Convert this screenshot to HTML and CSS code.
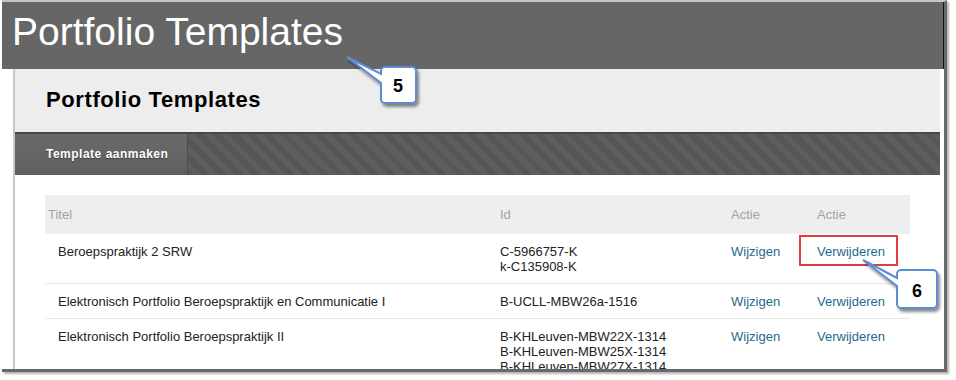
FILE: index.html
```html
<!DOCTYPE html>
<html lang="nl">
<head>
<meta charset="UTF-8">
<meta name="viewport" content="width=device-width, initial-scale=1.0">
<title>Portfolio Templates</title>
<link rel="stylesheet" href="styles.css">
</head>
<body>

<div class="window">
  <header class="topbar">
    <h1>Portfolio Templates</h1>
  </header>

  <main class="content">
    <div class="page-head">
      <h2>Portfolio Templates</h2>
    </div>

    <nav class="action-bar">
      <a class="action-btn" href="#">Template aanmaken</a>
    </nav>

    <div class="list">
      <table class="templates">
        <colgroup>
          <col class="col-title">
          <col class="col-id">
          <col class="col-edit">
          <col class="col-del">
        </colgroup>
        <thead>
          <tr>
            <th class="first">Titel</th>
            <th>Id</th>
            <th>Actie</th>
            <th>Actie</th>
          </tr>
        </thead>
        <tbody>
          <tr>
            <td class="first">Beroepspraktijk 2 SRW</td>
            <td>C-5966757-K<br>k-C135908-K</td>
            <td><a href="#">Wijzigen</a></td>
            <td><a href="#">Verwijderen</a></td>
          </tr>
          <tr>
            <td class="first">Elektronisch Portfolio Beroepspraktijk en Communicatie I</td>
            <td>B-UCLL-MBW26a-1516</td>
            <td><a href="#">Wijzigen</a></td>
            <td><a href="#">Verwijderen</a></td>
          </tr>
          <tr>
            <td class="first">Elektronisch Portfolio Beroepspraktijk II</td>
            <td>B-KHLeuven-MBW22X-1314<br>B-KHLeuven-MBW25X-1314<br>B-KHLeuven-MBW27X-1314</td>
            <td><a href="#">Wijzigen</a></td>
            <td><a href="#">Verwijderen</a></td>
          </tr>
        </tbody>
      </table>
    </div>
  </main>
</div>

<!-- annotation callouts drawn over the screenshot -->
<svg class="callouts" width="956" height="380" viewBox="0 0 956 380">
  <defs>
    <filter id="shadow" x="-20%" y="-20%" width="160%" height="160%">
      <feDropShadow dx="2" dy="3" stdDeviation="1.5" flood-color="#000" flood-opacity="0.45"/>
    </filter>
  </defs>
  <rect class="mark" x="800" y="236" width="97" height="29"/>
  <path class="bubble" filter="url(#shadow)" d="M385,67 h27 a4,4 0 0 1 4,4 v28 a4,4 0 0 1 -4,4 h-27 a4,4 0 0 1 -4,-4 v-16 L347,57 L381,74 v-3 a4,4 0 0 1 4,-4 z"/>
  <text class="bubble-num" x="398" y="92">5</text>
  <path class="bubble" filter="url(#shadow)" d="M901,270 h32 a4,4 0 0 1 4,4 v30 a4,4 0 0 1 -4,4 h-32 a4,4 0 0 1 -4,-4 v-18 L863,260 L897,278 v-4 a4,4 0 0 1 4,-4 z"/>
  <text class="bubble-num" x="917" y="297">6</text>
</svg>

</body>
</html>
```

FILE: styles.css
```css
body {
  margin: 0;
  background-color: #fff;
  font-family: "Liberation Sans", Arial, sans-serif;
  position: relative;
  width: 956px;
  height: 380px;
  overflow: hidden;
}

.window {
  margin-left: 2px;
  width: 942px;
  height: 367px;
  border-top: 2px solid #c6c6c6;
  border-right: 3px solid #686868;
  border-bottom: 3px solid #686868;
  box-shadow: 2px 2px 2px rgba(0, 0, 0, 0.3);
  overflow: hidden;
  background-color: #fff;
}

.topbar {
  height: 67px;
  background-color: #666;
  border-right: 1px solid #111;
  box-sizing: border-box;
  padding: 10px 0 0 10px;
}
.topbar h1 {
  margin: 0;
  font-size: 39px;
  line-height: 39px;
  font-weight: normal;
  color: #fff;
}

.content {
  margin-left: 11px;
  width: 925px;
  border-left: 2px solid #c8c8c8;
  height: 300px;
}

.page-head {
  height: 63px;
  box-sizing: border-box;
  background-color: #ededed;
  padding: 18px 0 0 31px;
}
.page-head h2 {
  margin: 0;
  font-size: 22px;
  line-height: 25px;
  letter-spacing: 0.6px;
  color: #000;
}

.action-bar {
  display: flex;
  height: 43px;
  box-sizing: border-box;
  border-top: 2px solid #474747;
  background-color: #585858;
  background-image: repeating-linear-gradient(45deg, #565656 0 6px, #5e5e5e 6px 12px);
}
.action-btn {
  display: block;
  width: 173px;
  box-sizing: border-box;
  padding-left: 31px;
  line-height: 41px;
  font-size: 12px;
  font-weight: bold;
  letter-spacing: 0.5px;
  color: #fff;
  text-decoration: none;
  text-shadow: 0 1px 1px rgba(0, 0, 0, 0.4);
  background: linear-gradient(#6a6a6a, #5f5f5f);
  border-right: 1px solid #4c4c4c;
}

.list {
  padding: 20px 30px 0 30px;
}

.templates {
  width: 865px;
  table-layout: fixed;
  border-collapse: collapse;
  font-size: 13px;
  line-height: 15px;
  color: #222;
}
.col-title { width: 455px; }
.col-id { width: 231px; }
.col-edit { width: 86px; }
.col-del { width: 93px; }

.templates th {
  background-color: #eee;
  color: #a3a3a3;
  font-weight: normal;
  text-align: left;
  padding: 12px 0;
}
.templates td {
  vertical-align: top;
  padding: 10px 0 9px;
  border-bottom: 1px solid #e6e6e6;
}
.templates th.first {
  padding-left: 3px;
}
.templates td.first {
  padding-left: 13px;
}

.templates a {
  color: #1f6a8c;
  text-decoration: none;
}

.callouts {
  position: absolute;
  left: 0;
  top: 0;
  pointer-events: none;
}
.mark {
  fill: none;
  stroke: #e23d3d;
  stroke-width: 2;
}
.bubble {
  fill: #fff;
  stroke: #5b8cd4;
  stroke-width: 2;
}
.bubble-num {
  font-family: "Liberation Sans", Arial, sans-serif;
  font-weight: bold;
  font-size: 18px;
  text-anchor: middle;
  fill: #000;
}
```
